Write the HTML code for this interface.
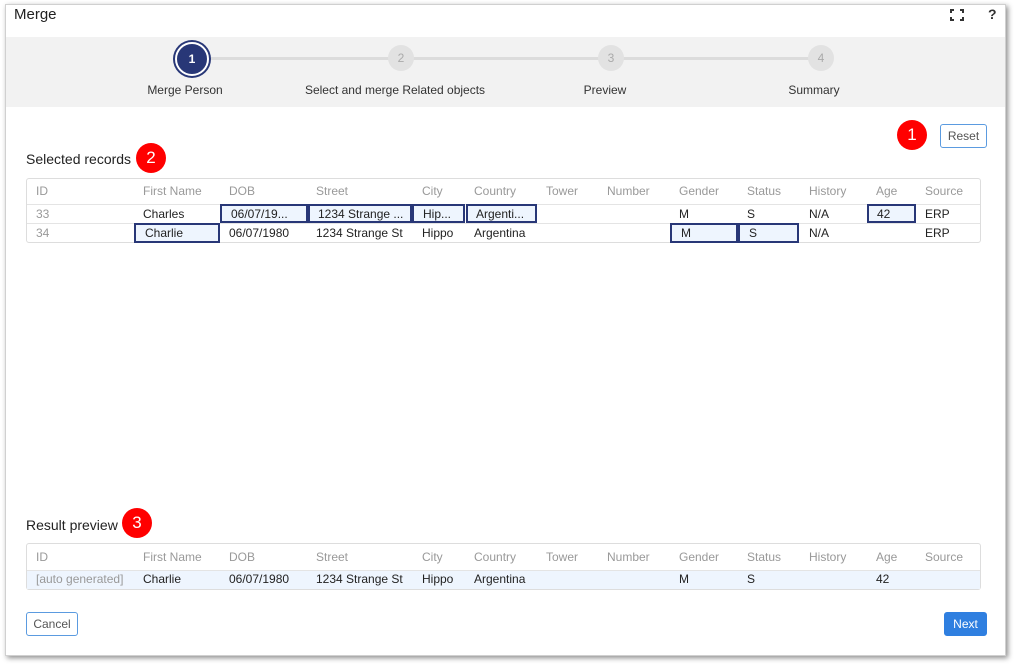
<!DOCTYPE html>
<html><head><style>
*{box-sizing:border-box;margin:0;padding:0}
body{width:1014px;height:666px;background:#fff;font-family:"Liberation Sans",sans-serif;position:relative;overflow:hidden;font-size:12px;color:#222}
.dlg{position:absolute;left:5px;top:4px;width:1001px;height:652px;background:#fff;border:1px solid #d0d0d0;box-shadow:2px 2px 5px rgba(0,0,0,.45)}
.a{position:absolute;white-space:nowrap}
.step{position:absolute;width:26px;height:26px;border-radius:50%;background:#e2e2e2;color:#aaa;font-size:12px;text-align:center;line-height:26px}
.line{position:absolute;height:3px;background:#dcdcdc;top:57px}
.lbl{position:absolute;font-size:12px;color:#333;top:83px;transform:translateX(-50%)}
.badge{position:absolute;width:30px;height:30px;border-radius:50%;background:#f00;color:#fff;font-size:17px;text-align:center;line-height:30px}
.tbl{position:absolute;left:26px;width:955px;border:1px solid #ddd;border-radius:3px}
.h{color:#999}
.hl{position:absolute;border:2px solid #283777;background:#eef5fe}
.btn{position:absolute;border:1px solid #5b9be0;border-radius:3px;color:#555;font-size:12px;text-align:center;background:#fff}
</style></head><body>
<div class="dlg"></div>
<div class="a" style="left:14px;top:6px;font-size:15px;color:#222">Merge</div>
<svg class="a" style="left:950px;top:9px" width="14" height="12" viewBox="0 0 14 12" fill="none" stroke="#333" stroke-width="2"><path d="M1 4V1h3M10 1h3v3M13 8v3h-3M4 11H1V8"/></svg>
<div class="a" style="left:988px;top:6px;font-size:14px;font-weight:bold;color:#333">?</div>
<div class="a" style="left:6px;top:37px;width:999px;height:70px;background:#f2f2f2"></div>
<div class="line" style="left:192px;width:629px"></div>
<div class="a" style="left:175px;top:42px;width:34px;height:34px;border-radius:50%;background:#283777;border:2px solid #fff;box-shadow:0 0 0 2px #283777;color:#fff;font-size:12px;text-align:center;line-height:30px;font-weight:bold">1</div>
<div class="step" style="left:388px;top:45px">2</div>
<div class="step" style="left:598px;top:45px">3</div>
<div class="step" style="left:808px;top:45px">4</div>
<div class="lbl" style="left:185px">Merge Person</div>
<div class="lbl" style="left:395px">Select and merge Related objects</div>
<div class="lbl" style="left:605px">Preview</div>
<div class="lbl" style="left:814px">Summary</div>

<div class="btn" style="left:940px;top:124px;width:47px;height:24px;line-height:22px">Reset</div>
<div class="badge" style="left:897px;top:120px">1</div>
<div class="a" style="left:26px;top:151px;font-size:14px">Selected records</div>
<div class="badge" style="left:136px;top:143px">2</div>

<div class="tbl" style="top:178px;height:65px">
<div class="a" style="left:0;top:25px;width:953px;border-top:1px solid #e4e4e4"></div>
<div class="a" style="left:0;top:44px;width:953px;border-top:1px solid #e4e4e4"></div>
</div>
<div class="hl" style="left:220px;top:204px;width:88px;height:19px"></div>
<div class="hl" style="left:308px;top:204px;width:104px;height:19px"></div>
<div class="hl" style="left:412px;top:204px;width:53px;height:19px"></div>
<div class="hl" style="left:466px;top:204px;width:71px;height:19px"></div>
<div class="hl" style="left:867px;top:204px;width:49px;height:19px"></div>
<div class="hl" style="left:134px;top:223px;width:86px;height:20px"></div>
<div class="hl" style="left:670px;top:223px;width:68px;height:20px"></div>
<div class="hl" style="left:738px;top:223px;width:61px;height:20px"></div>

<div class="a h" style="top:184px;left:36px">ID</div>
<div class="a h" style="top:184px;left:143px">First Name</div>
<div class="a h" style="top:184px;left:229px">DOB</div>
<div class="a h" style="top:184px;left:316px">Street</div>
<div class="a h" style="top:184px;left:422px">City</div>
<div class="a h" style="top:184px;left:474px">Country</div>
<div class="a h" style="top:184px;left:546px">Tower</div>
<div class="a h" style="top:184px;left:607px">Number</div>
<div class="a h" style="top:184px;left:679px">Gender</div>
<div class="a h" style="top:184px;left:747px">Status</div>
<div class="a h" style="top:184px;left:809px">History</div>
<div class="a h" style="top:184px;left:876px">Age</div>
<div class="a h" style="top:184px;left:925px">Source</div>

<div class="a h" style="top:207px;left:36px">33</div>
<div class="a" style="top:207px;left:143px">Charles</div>
<div class="a" style="top:207px;left:231px">06/07/19...</div>
<div class="a" style="top:207px;left:318px">1234 Strange ...</div>
<div class="a" style="top:207px;left:423px">Hip...</div>
<div class="a" style="top:207px;left:476px">Argenti...</div>
<div class="a" style="top:207px;left:679px">M</div>
<div class="a" style="top:207px;left:747px">S</div>
<div class="a" style="top:207px;left:809px">N/A</div>
<div class="a" style="top:207px;left:877px">42</div>
<div class="a" style="top:207px;left:925px">ERP</div>

<div class="a h" style="top:226px;left:36px">34</div>
<div class="a" style="top:226px;left:145px">Charlie</div>
<div class="a" style="top:226px;left:229px">06/07/1980</div>
<div class="a" style="top:226px;left:316px">1234 Strange St</div>
<div class="a" style="top:226px;left:422px">Hippo</div>
<div class="a" style="top:226px;left:474px">Argentina</div>
<div class="a" style="top:226px;left:681px">M</div>
<div class="a" style="top:226px;left:749px">S</div>
<div class="a" style="top:226px;left:809px">N/A</div>
<div class="a" style="top:226px;left:925px">ERP</div>

<div class="a" style="left:26px;top:517px;font-size:14px">Result preview</div>
<div class="badge" style="left:122px;top:508px">3</div>

<div class="tbl" style="top:543px;height:47px">
<div class="a" style="left:0;top:26px;width:953px;height:19px;border-top:1px solid #e4e4e4;background:#eef5fe"></div>
</div>
<div class="a h" style="top:550px;left:36px">ID</div>
<div class="a h" style="top:550px;left:143px">First Name</div>
<div class="a h" style="top:550px;left:229px">DOB</div>
<div class="a h" style="top:550px;left:316px">Street</div>
<div class="a h" style="top:550px;left:422px">City</div>
<div class="a h" style="top:550px;left:474px">Country</div>
<div class="a h" style="top:550px;left:546px">Tower</div>
<div class="a h" style="top:550px;left:607px">Number</div>
<div class="a h" style="top:550px;left:679px">Gender</div>
<div class="a h" style="top:550px;left:747px">Status</div>
<div class="a h" style="top:550px;left:809px">History</div>
<div class="a h" style="top:550px;left:876px">Age</div>
<div class="a h" style="top:550px;left:925px">Source</div>
<div class="a h" style="top:572px;left:36px">[auto generated]</div>
<div class="a" style="top:572px;left:143px">Charlie</div>
<div class="a" style="top:572px;left:229px">06/07/1980</div>
<div class="a" style="top:572px;left:316px">1234 Strange St</div>
<div class="a" style="top:572px;left:422px">Hippo</div>
<div class="a" style="top:572px;left:474px">Argentina</div>
<div class="a" style="top:572px;left:679px">M</div>
<div class="a" style="top:572px;left:747px">S</div>
<div class="a" style="top:572px;left:876px">42</div>

<div class="btn" style="left:26px;top:612px;width:52px;height:24px;line-height:22px">Cancel</div>
<div class="btn" style="left:944px;top:612px;width:43px;height:24px;line-height:22px;background:#2f7fe0;border-color:#2f7fe0;color:#fff">Next</div>
</body></html>
